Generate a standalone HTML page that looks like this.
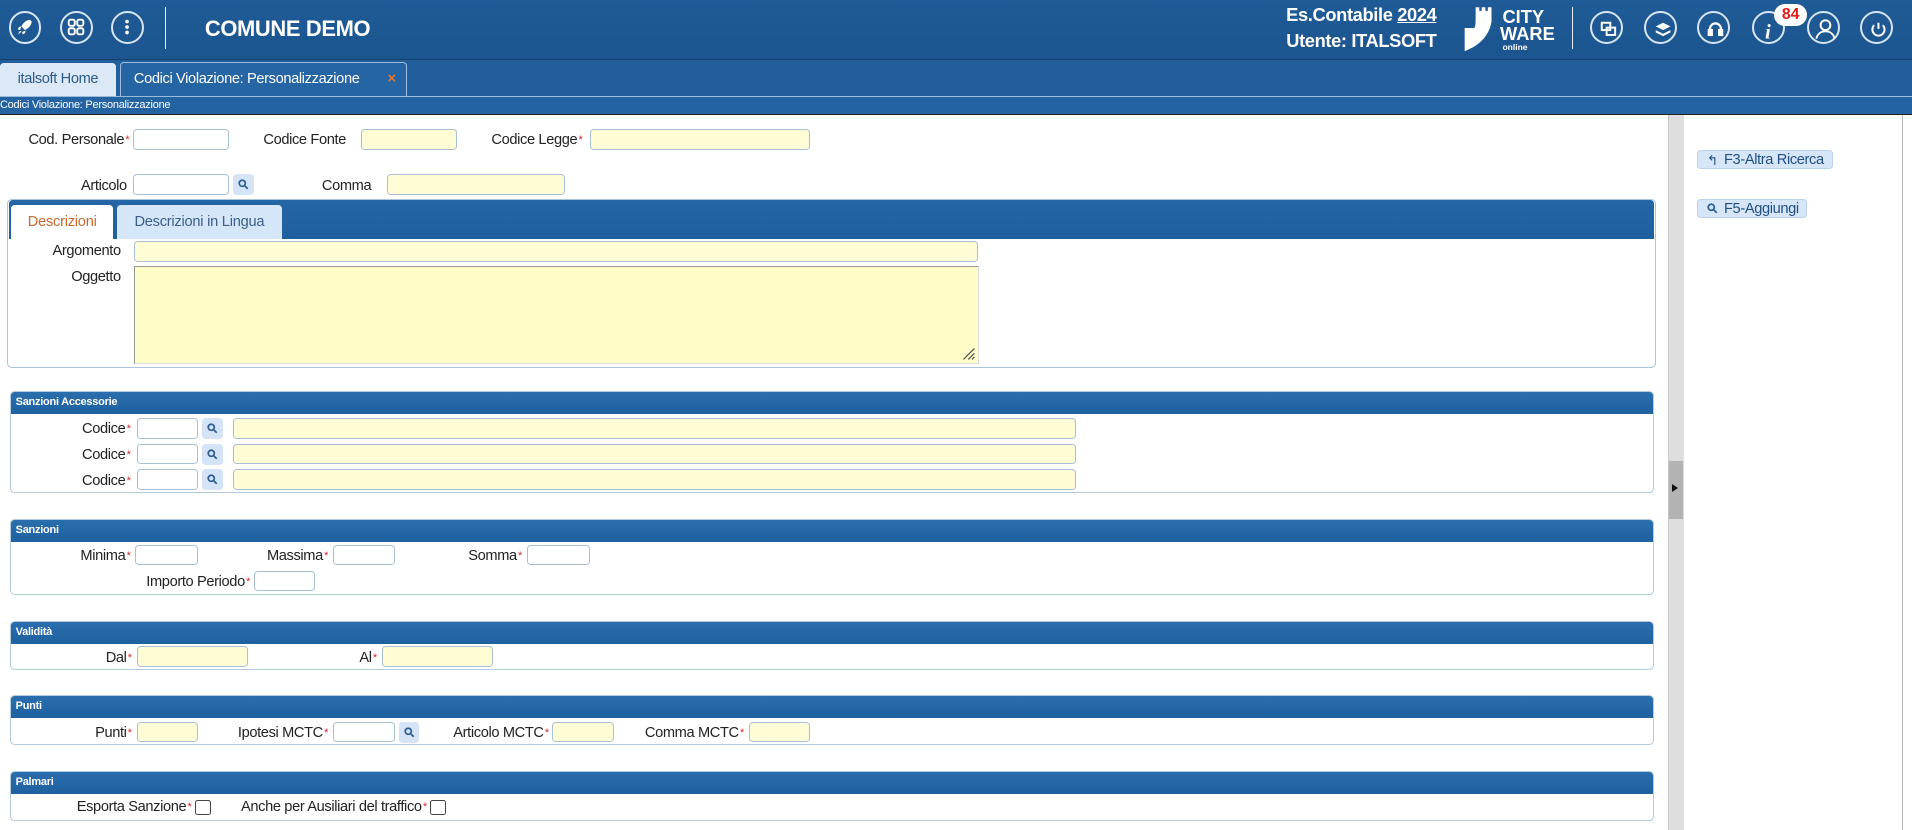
<!DOCTYPE html>
<html><head><meta charset="utf-8"><style>
html,body{margin:0;padding:0;background:#fff;overflow:hidden}
#w{zoom:1.2194;width:1568px;height:681px;position:relative;font-family:"Liberation Sans",sans-serif;font-size:12px;color:#222;overflow:hidden}
.a{position:absolute}
.hdr{left:0;top:0;width:1568px;height:48px;background:linear-gradient(#1f5b96,#1c5590);border-bottom:1px solid #163f6a}
.tabs{left:0;top:49px;width:1568px;height:30px;background:#215e9b}
.bc{left:0;top:79px;width:1568px;height:14px;background:#2463a1;border-top:1px solid #9cbbdb;border-bottom:1px solid #222;color:#fff;font-size:9px;line-height:14px;letter-spacing:-0.2px}
.lb{position:absolute;text-align:right;white-space:nowrap;letter-spacing:-0.3px;line-height:17px;padding-top:1px}
.lb i{color:#d22;font-style:normal;font-size:9px;vertical-align:top;margin-left:1px}
.in{position:absolute;height:15px;border:1px solid #a7c0d6;border-radius:3px;background:#fff;box-sizing:content-box}
.y{background:#fefdd6}
.sb{position:absolute;width:17px;height:17px;background:#d4e4f6;border-radius:3px;box-sizing:border-box}
.sb svg{position:absolute;left:4px;top:4px}
.box{position:absolute;left:8px;width:1347px;border:1px solid #b3cbe0;border-radius:4px;background:#fff}
.sh{position:absolute;left:0;top:0;right:0;height:18px;background:linear-gradient(#2a6eae,#1f619f);border-radius:3px 3px 0 0;color:#fff;font-size:9px;font-weight:bold;line-height:18px;padding-left:4px;letter-spacing:-0.2px}
.ic{position:absolute;top:9px;width:27px;height:27px;border:2px solid #d8e5f2;border-radius:50%;box-sizing:border-box}
.ic svg{position:absolute;left:0;top:0}
.cb{position:absolute;width:11px;height:11px;border:1px solid #444;border-radius:2px;background:#fff}
.btn{position:absolute;height:16px;background:#d6e6f8;border:1px solid #bcd3ec;border-radius:3px;font-size:12px;line-height:16px;color:#1f4f80;letter-spacing:-0.3px;padding-left:21px;box-sizing:border-box}
</style></head><body><div id="w">
<div class="a hdr"></div>
<div class="ic" style="left:7px"><svg width="23" height="23" viewBox="0 0 23 23"><path d="M15.5 5.5c-3 .3-5.5 2.5-7 5.5l3 3c3-1.5 5.2-4 5.5-7zM8.5 11l-2 .5-1 2 2 .3zM12 14.5l-.5 2-2 1-.3-2zM7.5 14.5l-2 3 3-2z" fill="#fff"/></svg></div>
<div class="ic" style="left:49px"><svg width="23" height="23" viewBox="0 0 23 23" fill="none" stroke="#fff" stroke-width="1.6"><rect x="5.5" y="5.5" width="5" height="5" rx="1.5"/><rect x="12.5" y="5.5" width="5" height="5" rx="1.5"/><rect x="5.5" y="12.5" width="5" height="5" rx="1.5"/><rect x="12.5" y="12.5" width="5" height="5" rx="1.5"/></svg></div>
<div class="ic" style="left:91px"><svg width="23" height="23" viewBox="0 0 23 23" fill="#fff"><circle cx="11.5" cy="7" r="1.5"/><circle cx="11.5" cy="11.5" r="1.5"/><circle cx="11.5" cy="16" r="1.5"/></svg></div>
<div class="a" style="left:135px;top:6px;width:1px;height:34px;background:#e8eef5"></div>
<div class="a" style="left:168px;top:13px;color:#fff;font-size:18px;font-weight:bold;letter-spacing:-0.3px">COMUNE DEMO</div>
<div class="a" style="left:1030px;top:2px;width:148px;text-align:right;color:#fff;font-size:15px;font-weight:bold;letter-spacing:-0.3px;line-height:21px">Es.Contabile <u>2024</u><br>Utente: ITALSOFT</div>
<svg class="a" style="left:1198px;top:5px" width="80" height="38" viewBox="0 0 80 38"><path d="M12 1h3v3h2V1h3v3h2V1h3v12c-2 11-9 19-22 24V18h8c1-2 1-5 1-8z" fill="#fff"/><text x="34" y="14" fill="#fff" font-size="15" font-weight="bold" font-family="Liberation Sans">CITY</text><text x="32" y="28" fill="#fff" font-size="15" font-weight="bold" font-family="Liberation Sans">WARE</text><text x="34" y="36" fill="#fff" font-size="7" font-weight="bold" font-family="Liberation Sans">online</text></svg>
<div class="a" style="left:1289px;top:6px;width:1px;height:34px;background:#e8eef5"></div>
<div class="ic" style="left:1304px"><svg width="27" height="27" viewBox="-2 -2 27 27" fill="none" stroke="#fff" stroke-width="1.6"><rect x="6" y="6" width="7" height="6"/><rect x="10" y="10" width="7" height="6"/></svg></div>
<div class="ic" style="left:1348px"><svg width="27" height="27" viewBox="-2 -2 27 27" fill="#fff"><path d="M6 9l6-3 6 3-6 3z M6 12l6 3 6-3v2l-6 3-6-3z"/></svg></div>
<div class="ic" style="left:1392px"><svg width="27" height="27" viewBox="-2 -2 27 27" fill="none" stroke="#fff" stroke-width="1.8"><path d="M7 14v-3a4.5 4.5 0 0 1 9 0v3"/><rect x="6" y="12" width="2.5" height="4" fill="#fff"/><rect x="14.5" y="12" width="2.5" height="4" fill="#fff"/></svg></div>
<div class="ic" style="left:1437px"><svg width="27" height="27" viewBox="-2 -2 27 27"><text x="7" y="19" fill="#fff" font-size="17" font-weight="bold" font-style="italic" font-family="Liberation Serif">i</text></svg></div>
<div class="a" style="left:1455px;top:3px;width:27px;height:18px;background:#fff;border-radius:9px;color:#e31b1b;font-weight:bold;font-size:13px;text-align:center;line-height:18px">84</div>
<div class="ic" style="left:1482px"><svg width="27" height="27" viewBox="-2 -2 27 27" fill="none" stroke="#fff" stroke-width="1.6"><circle cx="11.5" cy="8" r="4"/><path d="M4 19c1-4 4-6 7.5-6s6.5 2 7.5 6"/></svg></div>
<div class="ic" style="left:1525px"><svg width="27" height="27" viewBox="-2 -2 27 27" fill="none" stroke="#fff" stroke-width="1.6"><path d="M8 8a5 5 0 1 0 7 0M11.5 6v5"/></svg></div>

<div class="a tabs"></div>
<div class="a" style="left:0;top:52px;width:95px;height:27px;background:#dce8f5;border-radius:3px 3px 0 0;color:#2b5b8a;line-height:27px;text-align:center;letter-spacing:-0.3px">italsoft Home</div>
<div class="a" style="left:98px;top:51px;width:236px;height:28px;background:#2565a3;border:1px solid #9dbcdc;border-bottom:none;border-radius:3px 3px 0 0;box-sizing:border-box;color:#fff;line-height:27px;padding-left:11px;letter-spacing:-0.3px">Codici Violazione: Personalizzazione<span style="color:#e8782a;font-weight:bold;position:absolute;left:219px">×</span></div>
<div class="a bc">Codici Violazione: Personalizzazione</div>

<div class="lb" style="right:1462px;top:106px">Cod. Personale<i>*</i></div><div class="in" style="left:109px;top:106px;width:77px"></div>
<div class="lb" style="left:216px;top:106px">Codice Fonte</div><div class="in y" style="left:296px;top:106px;width:77px"></div>
<div class="lb" style="left:403px;top:106px">Codice Legge<i>*</i></div><div class="in y" style="left:484px;top:106px;width:179px"></div>
<div class="lb" style="right:1464px;top:143px">Articolo</div><div class="in" style="left:109px;top:143px;width:77px"></div>
<div class="sb" style="left:191px;top:143px"><svg width="9" height="9" viewBox="0 0 9 9" fill="none" stroke="#2a5d94" stroke-width="1.4"><circle cx="3.5" cy="3.5" r="2.5"/><path d="M5.3 5.3L8 8"/></svg></div>
<div class="lb" style="left:264px;top:143px">Comma</div><div class="in y" style="left:317px;top:143px;width:145px"></div>

<div class="a" style="left:6px;top:163px;width:1350px;height:137px;border:1px solid #a9c4dc;border-radius:4px"></div>
<div class="a" style="left:7px;top:164px;width:1349px;height:32px;background:linear-gradient(#2467a6,#1f5f9d);border-radius:3px 3px 0 0"></div>
<div class="a" style="left:9px;top:168px;width:84px;height:28px;background:#fff;border-radius:3px 3px 0 0;color:#c8692c;line-height:28px;text-align:center;letter-spacing:-0.2px">Descrizioni</div>
<div class="a" style="left:96px;top:168px;width:135px;height:28px;background:#d6e6f9;border-radius:3px 3px 0 0;color:#3b5f86;line-height:28px;text-align:center;letter-spacing:-0.2px">Descrizioni in Lingua</div>
<div class="lb" style="right:1469px;top:197px">Argomento</div><div class="in y" style="left:110px;top:198px;width:690px"></div>
<div class="lb" style="right:1469px;top:218px">Oggetto</div>
<div class="a" style="left:110px;top:218px;width:691px;height:79px;background:#fefdc7;border:1px solid #999;border-bottom-color:#ddd;border-right-color:#ddd"></div>
<svg class="a" style="left:788px;top:284px" width="12" height="12" viewBox="0 0 12 12" stroke="#555" stroke-width="1"><path d="M11 2L2 11M11 6L6 11M11 9L9 11"/></svg>

<div class="box" style="top:321px;height:82px"><div class="sh">Sanzioni Accessorie</div></div>
<div class="lb" style="right:1461px;top:343px">Codice<i>*</i></div><div class="in" style="left:112px;top:343px;width:49px"></div><div class="sb" style="left:166px;top:343px"><svg width="9" height="9" viewBox="0 0 9 9" fill="none" stroke="#2a5d94" stroke-width="1.4"><circle cx="3.5" cy="3.5" r="2.5"/><path d="M5.3 5.3L8 8"/></svg></div><div class="in y" style="left:191px;top:343px;width:690px"></div>
<div class="lb" style="right:1461px;top:364px">Codice<i>*</i></div><div class="in" style="left:112px;top:364px;width:49px"></div><div class="sb" style="left:166px;top:364px"><svg width="9" height="9" viewBox="0 0 9 9" fill="none" stroke="#2a5d94" stroke-width="1.4"><circle cx="3.5" cy="3.5" r="2.5"/><path d="M5.3 5.3L8 8"/></svg></div><div class="in y" style="left:191px;top:364px;width:690px"></div>
<div class="lb" style="right:1461px;top:385px">Codice<i>*</i></div><div class="in" style="left:112px;top:385px;width:49px"></div><div class="sb" style="left:166px;top:385px"><svg width="9" height="9" viewBox="0 0 9 9" fill="none" stroke="#2a5d94" stroke-width="1.4"><circle cx="3.5" cy="3.5" r="2.5"/><path d="M5.3 5.3L8 8"/></svg></div><div class="in y" style="left:191px;top:385px;width:690px"></div>

<div class="box" style="top:426px;height:60px"><div class="sh">Sanzioni</div></div>
<div class="lb" style="right:1461px;top:447px">Minima<i>*</i></div><div class="in" style="left:111px;top:447px;width:50px"></div>
<div class="lb" style="right:1299px;top:447px">Massima<i>*</i></div><div class="in" style="left:273px;top:447px;width:49px"></div>
<div class="lb" style="right:1140px;top:447px">Somma<i>*</i></div><div class="in" style="left:432px;top:447px;width:50px"></div>
<div class="lb" style="right:1363px;top:468px">Importo Periodo<i>*</i></div><div class="in" style="left:208px;top:468px;width:49px"></div>

<div class="box" style="top:509px;height:39px"><div class="sh">Validità</div></div>
<div class="lb" style="right:1460px;top:530px">Dal<i>*</i></div><div class="in y" style="left:112px;top:530px;width:90px"></div>
<div class="lb" style="right:1259px;top:530px">Al<i>*</i></div><div class="in y" style="left:313px;top:530px;width:90px"></div>

<div class="box" style="top:570px;height:39px"><div class="sh">Punti</div></div>
<div class="lb" style="right:1460px;top:592px">Punti<i>*</i></div><div class="in y" style="left:112px;top:592px;width:49px"></div>
<div class="lb" style="right:1299px;top:592px">Ipotesi MCTC<i>*</i></div><div class="in" style="left:273px;top:592px;width:49px"></div><div class="sb" style="left:327px;top:592px"><svg width="9" height="9" viewBox="0 0 9 9" fill="none" stroke="#2a5d94" stroke-width="1.4"><circle cx="3.5" cy="3.5" r="2.5"/><path d="M5.3 5.3L8 8"/></svg></div>
<div class="lb" style="right:1118px;top:592px">Articolo MCTC<i>*</i></div><div class="in y" style="left:453px;top:592px;width:49px"></div>
<div class="lb" style="right:958px;top:592px">Comma MCTC<i>*</i></div><div class="in y" style="left:614px;top:592px;width:49px"></div>

<div class="box" style="top:632px;height:40px"><div class="sh">Palmari</div></div>
<div class="lb" style="right:1411px;top:653px">Esporta Sanzione<i>*</i></div><div class="cb" style="left:160px;top:656px"></div>
<div class="lb" style="right:1218px;top:653px">Anche per Ausiliari del traffico<i>*</i></div><div class="cb" style="left:353px;top:656px"></div>

<div class="a" style="left:1368px;top:94px;width:12px;height:587px;background:#dedede;border-left:1px solid #c8c8c8"></div>
<div class="a" style="left:1369px;top:378px;width:11px;height:48px;background:#b3b3b3"></div>
<div class="a" style="left:1371px;top:397px;width:0;height:0;border-left:5px solid #111;border-top:4px solid transparent;border-bottom:4px solid transparent"></div>
<div class="a" style="left:1381px;top:94px;width:179px;height:587px;border-right:1px solid #bbb;background:#fff"></div>
<div class="btn" style="left:1392px;top:123px;width:111px"><span style="position:absolute;left:7px;top:0;font-size:11px">↰</span>F3-Altra Ricerca</div>
<div class="btn" style="left:1392px;top:163px;width:90px"><svg style="position:absolute;left:7px;top:3px" width="9" height="9" viewBox="0 0 9 9" fill="none" stroke="#2a5d94" stroke-width="1.4"><circle cx="3.5" cy="3.5" r="2.5"/><path d="M5.3 5.3L8 8"/></svg>F5-Aggiungi</div>
</div></body></html>
